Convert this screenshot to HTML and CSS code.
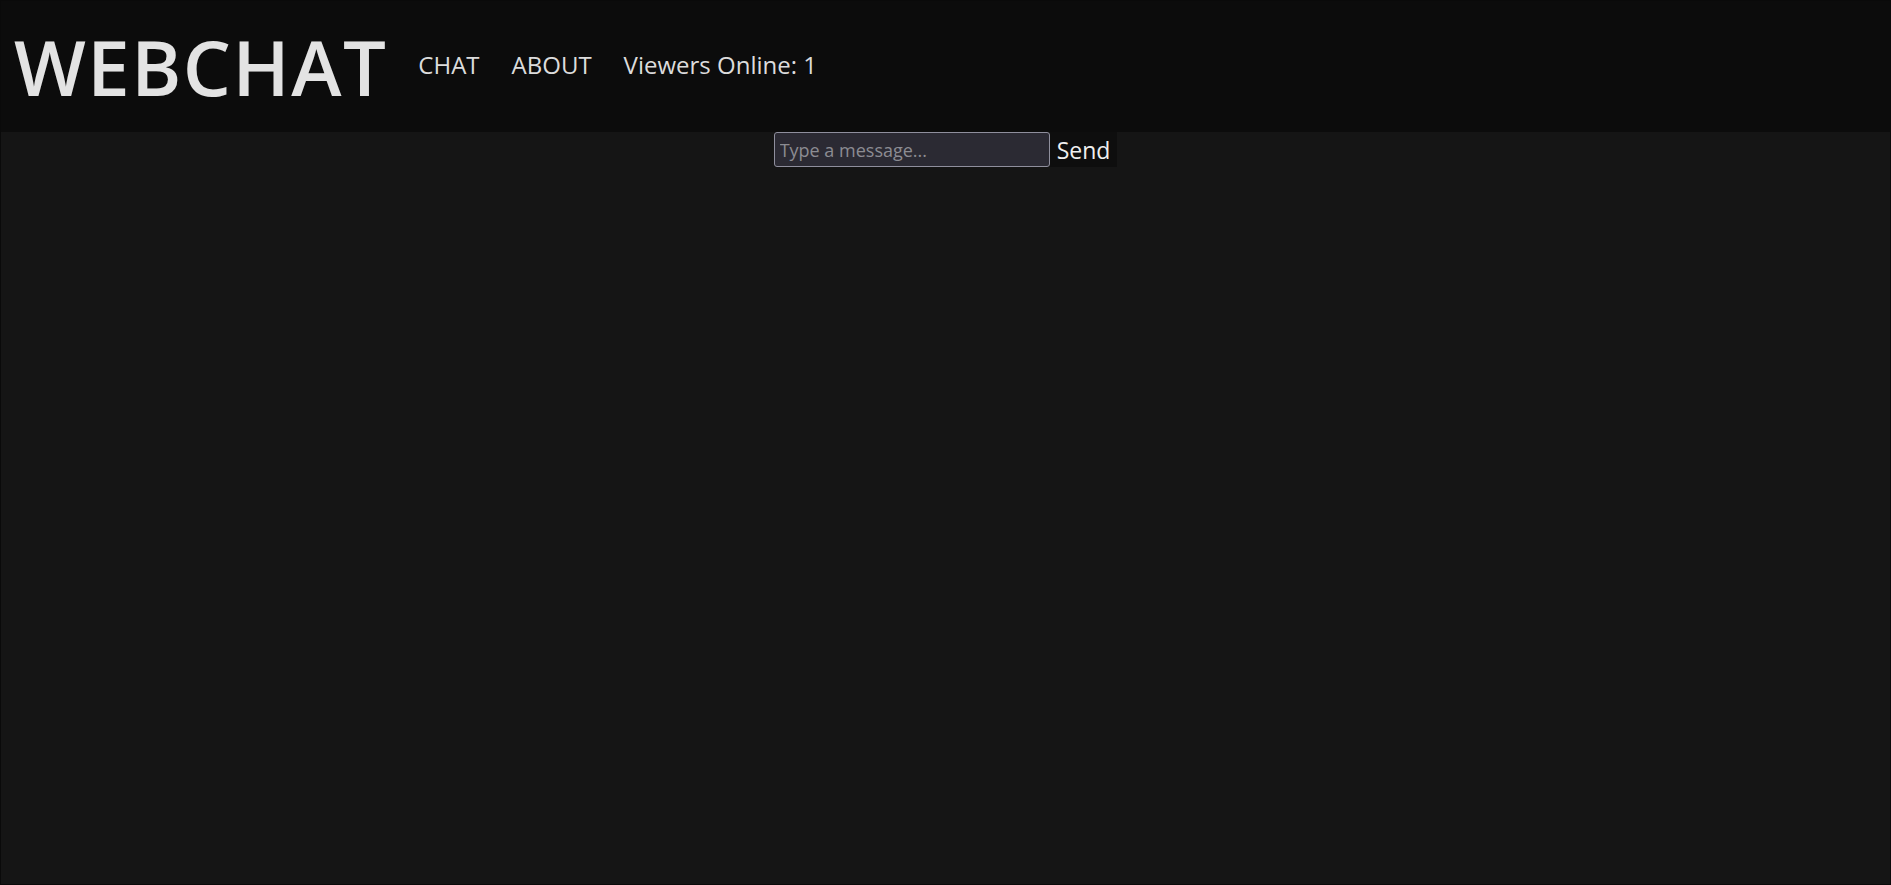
FILE: index.html
```html
<!DOCTYPE html>
<html lang="en">
<head>
<meta charset="utf-8">
<title>WEBCHAT</title>
<link rel="stylesheet" href="styles.css">
</head>
<body>
<div class="frame">
  <header class="topbar">
    <h1 class="logo">WEBCHAT</h1>
    <nav class="nav">
      <a class="nav-link" href="#">CHAT</a>
      <a class="nav-link" href="#">ABOUT</a>
      <span class="nav-link">Viewers Online: 1</span>
    </nav>
  </header>
  <main class="content">
    <form class="composer">
      <input class="composer-input" type="text" placeholder="Type a message...">
      <button class="composer-send" type="button">Send</button>
    </form>
  </main>
</div>
</body>
</html>
```
FILE: styles.css
```css
html, body {
  margin: 0;
  padding: 0;
  height: 100%;
  background: #151515;
}
body {
  font-family: "Open Sans", "Noto Sans", sans-serif;
  color: #e0e0e0;
}
.frame {
  box-sizing: border-box;
  height: 100vh;
  border: 1px solid #0a0a0a;
  display: flex;
  flex-direction: column;
}
.topbar {
  height: 131px;
  background: #0c0c0c;
  display: flex;
  align-items: center;
  padding-left: 13px;
  gap: 31px;
}
.logo {
  margin: 0;
  font-size: 76px;
  font-weight: 600;
  letter-spacing: 1.5px;
  color: #e3e3e3;
  line-height: 1;
}
.nav {
  display: flex;
  gap: 32px;
  align-items: center;
  padding-bottom: 4px;
}
.nav-link {
  font-size: 24px;
  color: #dcdcdc;
  text-decoration: none;
}
.content {
  flex: 1;
  display: flex;
  justify-content: center;
  align-items: flex-start;
}
.composer {
  display: flex;
  margin: 0;
}
.composer-input {
  box-sizing: border-box;
  width: 276px;
  height: 35px;
  background: #2b2a33;
  border: 1px solid #8f8f9d;
  border-radius: 3px;
  color: #e0e0e0;
  font-family: "Open Sans", "Noto Sans", sans-serif;
  font-size: 18px;
  padding: 0 5px;
  margin: 0;
}
.composer-input::placeholder {
  color: #8c8c92;
}
.composer-send {
  height: 35px;
  background: #0e0e0e;
  border: none;
  color: #f0f0f0;
  font-family: "Open Sans", "Noto Sans", sans-serif;
  font-size: 23px;
  padding: 0 7px;
  margin: 0;
}
```
